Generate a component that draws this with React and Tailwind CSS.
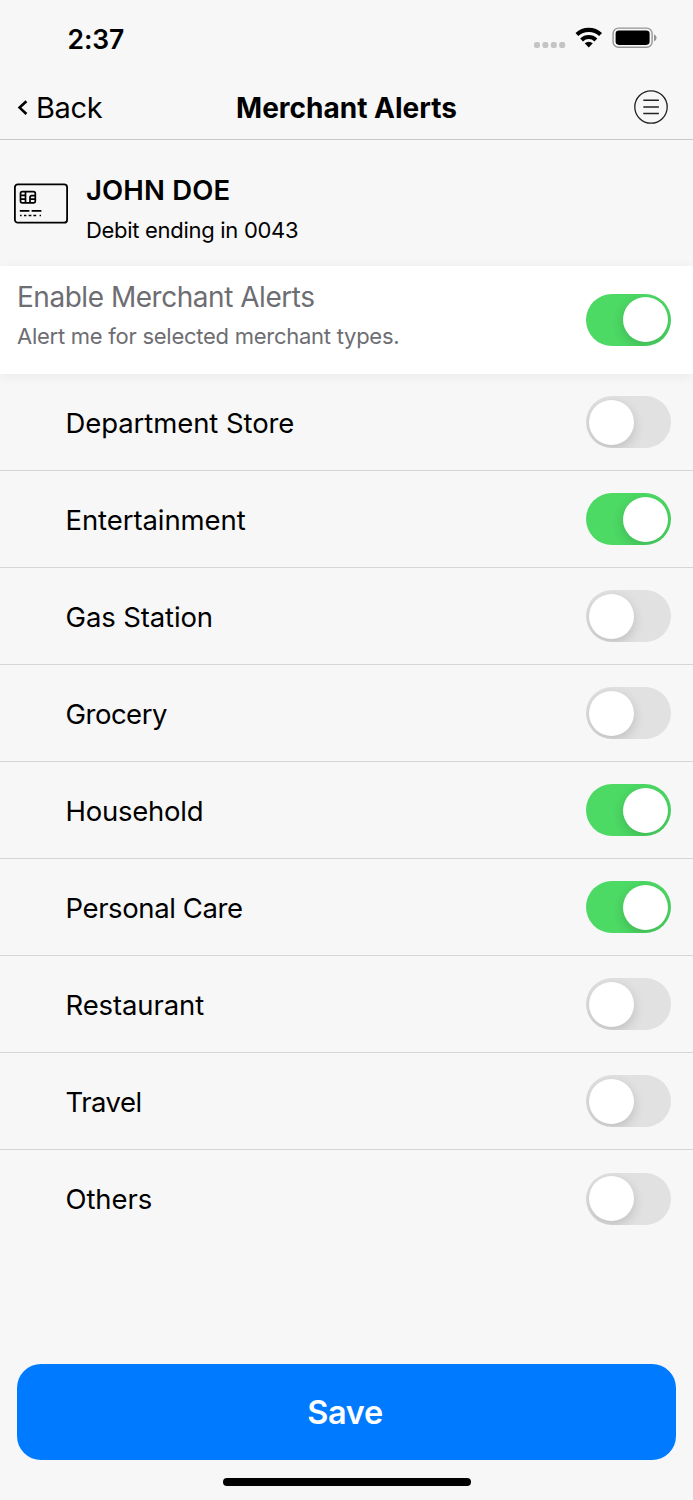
import { useState } from "react";

const MERCHANTS = [
  { name: "Department Store", on: false, tracking: "tracking-[-0.08px]" },
  { name: "Entertainment", on: true, tracking: "tracking-[-0.08px]" },
  { name: "Gas Station", on: false, tracking: "tracking-[-0.12px]" },
  { name: "Grocery", on: false, tracking: "tracking-[-0.5px]" },
  { name: "Household", on: true, tracking: "tracking-[-0.25px]" },
  { name: "Personal Care", on: true, tracking: "tracking-[-0.4px]" },
  { name: "Restaurant", on: false, tracking: "tracking-[-0.12px]" },
  { name: "Travel", on: false, tracking: "tracking-[-0.5px]" },
  { name: "Others", on: false, tracking: "tracking-[-0.1px]" },
];

function Toggle({ initial, label }) {
  const [on, setOn] = useState(initial);
  return (
    <button
      type="button"
      role="switch"
      aria-checked={on}
      aria-label={label}
      onClick={() => setOn(!on)}
      className={`flex h-[52px] w-[85px] shrink-0 items-center overflow-hidden rounded-full ${
        on ? "justify-end bg-[#4cd964] pr-[3px]" : "justify-start bg-[#e1e1e1] pl-[3px]"
      }`}
    >
      <span className="size-[45px] rounded-full bg-white shadow-[0_4px_12px_rgba(0,0,0,0.16)]" />
    </button>
  );
}

function StatusBar() {
  return (
    <div className="flex h-[76px] items-center justify-between pr-[36px] pl-[67.5px]">
      <span className="pt-px text-[26.5px] leading-[32px] font-semibold tracking-[-0.1px]">2:37</span>
      <svg width="124" height="32" viewBox="0 0 124 32" aria-hidden="true">
        <g fill="#c4c4c4">
          <rect x="1" y="20" width="6" height="6" rx="2.2" />
          <rect x="9.4" y="20" width="6" height="6" rx="2.2" />
          <rect x="17.8" y="20" width="6" height="6" rx="2.2" />
          <rect x="26.2" y="20" width="6" height="6" rx="2.2" />
        </g>
        <g fill="none" stroke="#000" strokeWidth="4.1">
          <path d="M43.9 12.6A17.2 17.2 0 0 1 67.6 12.6" />
          <path d="M48.6 17.9A10.4 10.4 0 0 1 62.9 17.9" />
        </g>
        <path d="M51.7 21.3a6 6 0 0 1 8.1 0l-4.05 4.3z" fill="#000" />
        <rect x="80.1" y="6.1" width="39" height="19.2" rx="5.4" fill="none" stroke="#959595" strokeWidth="1.4" />
        <rect x="82.6" y="8.6" width="34" height="14.3" rx="3.3" />
        <path d="M121 12.2q2.6 1 2.6 3.6t-2.6 3.6z" fill="#959595" />
      </svg>
    </div>
  );
}

function NavBar() {
  return (
    <header className="grid h-[64px] grid-cols-[1fr_auto_1fr] items-center border-b border-[#c8c8c8] pr-[25px] pb-px pl-[25px]">
      <button
        type="button"
        className="-ml-[8px] flex items-center gap-[8px] pt-px text-[29px] leading-[36px] tracking-[-0.4px]"
      >
        <svg width="11" height="18" viewBox="0 0 11 18" fill="none" stroke="#000" strokeWidth="2.6" aria-hidden="true">
          <path d="M9.4 2.2 2.6 8.6l6.8 6.4" />
        </svg>
        Back
      </button>
      <h1 className="pt-[2px] text-[28px] leading-[36px] font-bold">Merchant Alerts</h1>
      <button type="button" aria-label="Menu" className="justify-self-end">
        <svg width="34" height="34" viewBox="0 0 34 34" fill="none" stroke="#222" aria-hidden="true">
          <circle cx="17" cy="17" r="16.2" strokeWidth="1.3" />
          <path d="M9.3 10.3h15.6M9.3 17h15.6M9.3 23.5h15.6" strokeWidth="1.4" />
        </svg>
      </button>
    </header>
  );
}

function CardIcon() {
  return (
    <svg width="54" height="41" viewBox="0 0 54 41" fill="none" stroke="#000" aria-hidden="true">
      <rect x="0.9" y="1.3" width="52.2" height="38.4" rx="3" strokeWidth="1.8" />
      <g strokeWidth="1.7">
        <rect x="6.5" y="8.6" width="14.8" height="11.2" rx="1.8" />
        <path d="M6.5 12.3h4.8M6.5 16.1h4.8M11.5 8.6v11.2" />
        <path d="M16 19.8v-5.4q0-1.8 1.8-1.8h3.5M16 16.2h5.3" />
      </g>
      <path d="M5.8 27.8h9.6M17.6 27.8h9.8" strokeWidth="1.8" />
      <path d="M6 32.5h1.6M10 32.5h2.4M14.6 32.5h2.8M19.4 32.5h2.8M25.6 32.5h1.4" strokeWidth="1.7" />
    </svg>
  );
}

export default function App() {
  return (
    <div className="flex h-[1500px] w-full flex-col bg-[#f7f7f7] font-['Inter',sans-serif] text-black">
      <StatusBar />
      <NavBar />
      <section className="flex h-[126px] shrink-0 gap-[18px] pt-[32px] pl-[14px]">
        <div className="pt-[11px]">
          <CardIcon />
        </div>
        <div>
          <h2 className="text-[27.5px] leading-[36px] font-semibold tracking-[0.15px]">JOHN DOE</h2>
          <p className="mt-[7px] text-[22px] leading-[30px] tracking-[-0.3px]">Debit ending in 0043</p>
        </div>
      </section>
      <section className="relative flex h-[107.5px] shrink-0 items-center justify-between bg-white pr-[22px] pl-[17px] text-[#6d6d72] shadow-[0_2px_12px_rgba(0,0,0,0.06)]">
        <div className="self-start pt-[13px]">
          <h2 className="text-[28px] leading-[36px] tracking-[-0.47px]">Enable Merchant Alerts</h2>
          <p className="mt-[6px] text-[22px] leading-[30px] tracking-[-0.26px]">Alert me for selected merchant types.</p>
        </div>
        <Toggle initial={true} label="Enable Merchant Alerts" />
      </section>
      <ul className="mt-[0.5px] shrink-0">
        {MERCHANTS.map((m) => (
          <li
            key={m.name}
            className="flex h-[97px] items-center justify-between border-b border-[#d6d6d6] pr-[22px] pl-[65.5px] last:border-b-0"
          >
            <span className={`pt-px text-[27.5px] leading-[36px] ${m.tracking}`}>{m.name}</span>
            <Toggle initial={m.on} label={m.name} />
          </li>
        ))}
      </ul>
      <div className="mt-auto flex flex-col items-center px-[17px] pb-[14px]">
        <button
          type="button"
          className="h-[95.5px] w-full rounded-[24px] bg-[#007aff] pt-[2px] pr-[3px] text-[32.5px] leading-[40px] font-semibold tracking-[-0.3px] text-white"
        >
          Save
        </button>
        <div className="mt-[18px] h-[8.5px] w-[248px] rounded-full bg-black" />
      </div>
    </div>
  );
}
